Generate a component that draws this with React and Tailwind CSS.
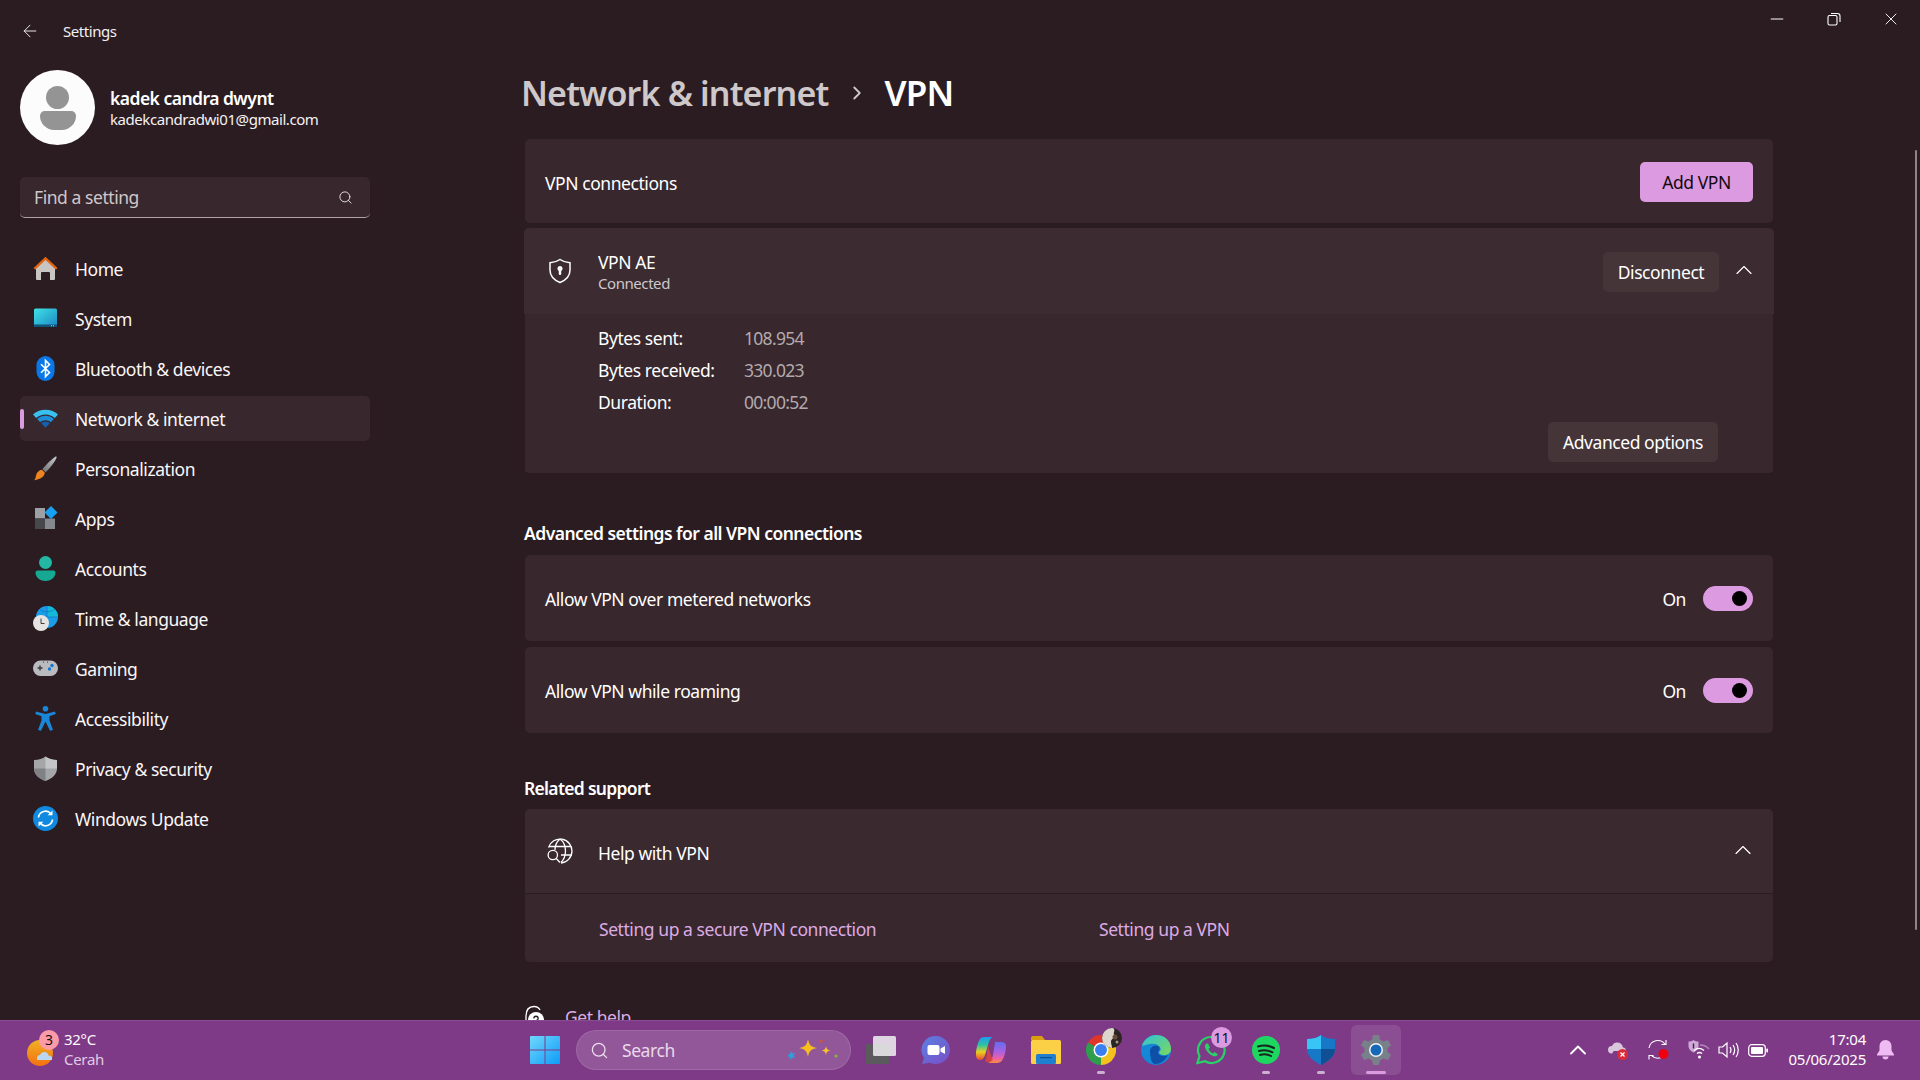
import { ArrowLeft, ChevronRight, ChevronUp, Minus, Search, X } from 'lucide-react';

const navItems = [
  { label: 'Home', icon: <HomeIcon /> },
  { label: 'System', icon: <SystemIcon /> },
  { label: 'Bluetooth & devices', icon: <BluetoothIcon /> },
  { label: 'Network & internet', icon: <WifiIcon />, active: true },
  { label: 'Personalization', icon: <BrushIcon /> },
  { label: 'Apps', icon: <AppsIcon /> },
  { label: 'Accounts', icon: <AccountsIcon /> },
  { label: 'Time & language', icon: <TimeIcon /> },
  { label: 'Gaming', icon: <GamingIcon /> },
  { label: 'Accessibility', icon: <AccessibilityIcon /> },
  { label: 'Privacy & security', icon: <PrivacyIcon /> },
  { label: 'Windows Update', icon: <UpdateIcon /> },
];

/* ====== Sidebar icons ====== */
function HomeIcon() {
  return (
    <svg width="25" height="25" viewBox="0 0 25 25">
      <path d="M3 11.500 12.500 3 22 11.500V23a1 1 0 0 1-1 1h-4v-7a1 1 0 0 0-1-1H9a1 1 0 0 0-1 1v7H4a1 1 0 0 1-1-1z" fill="#c9c5c3" />
      <path d="M.5 12 12.500.8 24.500 12l-1.600 1.700-10.400-9.700L2.100 13.700z" fill="#e0650f" />
    </svg>
  );
}
function SystemIcon() {
  return (
    <svg width="25" height="25" viewBox="0 0 25 25">
      <defs>
        <linearGradient id="sysG" x1="0" y1="0" x2="1" y2="1">
          <stop offset="0" stopColor="#40e2e6" />
          <stop offset="1" stopColor="#1b86c4" />
        </linearGradient>
      </defs>
      <rect x="1" y="2.500" width="23" height="18.500" rx="1.500" fill="url(#sysG)" />
      <path d="M1 18.500h23V20a1 1 0 0 1-1 1H2a1 1 0 0 1-1-1z" fill="#0f5378" />
      <rect x="18" y="19.300" width="1" height="1" fill="#9fd8ee" />
      <rect x="20" y="19.300" width="1" height="1" fill="#9fd8ee" />
    </svg>
  );
}
function BluetoothIcon() {
  return (
    <svg width="25" height="25" viewBox="0 0 25 25">
      <rect x="3.500" y="0" width="18" height="25" rx="9" fill="#0878e8" />
      <path d="M8 8.200 16.500 16.500 12.500 20.500V4.500L16.500 8.500 8 16.800" fill="none" stroke="#fff" strokeWidth="1.600" />
    </svg>
  );
}
function WifiIcon() {
  return (
    <svg width="25" height="25" viewBox="0 0 25 25">
      <path d="M0 8.500C3 5.500 7.500 3.800 12.500 3.800S22 5.500 25 8.500L21.800 12C19.300 9.700 16 8.400 12.500 8.400S5.700 9.700 3.200 12z" fill="#38c0f0" />
      <path d="M4.200 13C6.500 11 9.400 9.800 12.500 9.800s6 1.200 8.300 3.200l-3 3.200c-1.500-1.200-3.300-1.900-5.300-1.900s-3.800.7-5.300 1.900z" fill="#1c8fd8" />
      <path d="M8.200 17.200c1.200-.9 2.700-1.400 4.300-1.400s3.100.5 4.300 1.400l-4.300 4.600z" fill="#125fae" />
    </svg>
  );
}
function BrushIcon() {
  return (
    <svg width="25" height="25" viewBox="0 0 25 25">
      <defs>
        <linearGradient id="brushG" x1="0" y1="1" x2="1" y2="0">
          <stop offset="0" stopColor="#6d7074" />
          <stop offset="1" stopColor="#c8cacc" />
        </linearGradient>
      </defs>
      <path d="M22.600.6c.6-.3 1.200.2 1 .9-1.200 3.600-6 10.400-11 14.700l-3.200-3.100C13.600 8.600 19 2.600 22.600.6z" fill="url(#brushG)" />
      <path d="M8.800 13.700l3 2.900c-.3 3.600-3 6.800-10.800 7.600 2-1.800 1.600-3.500 2.300-5.800.7-2.300 2.900-4.300 5.500-4.700z" fill="#ee8420" />
    </svg>
  );
}
function AppsIcon() {
  return (
    <svg width="25" height="25" viewBox="0 0 25 25">
      <rect x="2" y="2" width="10" height="10.500" fill="#9da0a4" />
      <rect x="2" y="12.500" width="10" height="10.500" fill="#46484c" />
      <rect x="12" y="12.500" width="10" height="10.500" fill="#85888c" />
      <path d="M18 0l6.500 6.500L18 13l-6.500-6.500z" fill="#18a0f0" />
    </svg>
  );
}
function AccountsIcon() {
  return (
    <svg width="25" height="25" viewBox="0 0 25 25">
      <circle cx="12.500" cy="6.500" r="6.500" fill="#22b8a4" />
      <path d="M2.500 16.500a2 2 0 0 1 2-2h16a2 2 0 0 1 2 2c0 5-5 8.500-10 8.500s-10-3.500-10-8.500z" fill="#17a893" />
    </svg>
  );
}
function TimeIcon() {
  return (
    <svg width="25" height="25" viewBox="0 0 25 25">
      <circle cx="14" cy="11" r="11" fill="#1b9ce6" />
      <path d="M14 0a11 11 0 0 1 11 11H14z" fill="#16b8d8" />
      <path d="M3 11h22M14 0v22M7 3.500c4 3 10 3 14 0" fill="none" stroke="#0c74c4" strokeWidth=".7" />
      <circle cx="8" cy="17" r="8" fill="#e6e4e2" />
      <path d="M8 12.500V17.500h3.500" fill="none" stroke="#3c3c3c" strokeWidth="1" />
    </svg>
  );
}
function GamingIcon() {
  return (
    <svg width="25" height="25" viewBox="0 0 25 25">
      <rect x="0" y="4.500" width="25" height="15.500" rx="7.500" fill="#b9bbbe" />
      <path d="M4.500 12h5M7 9.500v5" stroke="#3c3e42" strokeWidth="1.500" />
      <circle cx="19" cy="9.500" r="1.700" fill="#1277d6" />
      <circle cx="16.500" cy="13" r="1.700" fill="#1277d6" />
      <rect x="10" y="5.600" width="1" height="1" fill="#3c3e42" />
      <rect x="14" y="5.600" width="1" height="1" fill="#3c3e42" />
    </svg>
  );
}
function AccessibilityIcon() {
  return (
    <svg width="25" height="25" viewBox="0 0 25 25">
      <circle cx="12.500" cy="2.800" r="2.800" fill="#1a86d8" />
      <path d="M3 5.500 12.500 8 22 5.500l.7 2.500-6.200 2.300v4.200l3.500 9.500-3 .8-4.500-9.300-4.500 9.300-3-.8L8.500 14.500v-4.200L2.300 8z" fill="#1a86d8" />
    </svg>
  );
}
function PrivacyIcon() {
  return (
    <svg width="25" height="25" viewBox="0 0 25 25">
      <path d="M12.500.5C15.500 2.800 19 4 24 4v8.500c0 5.500-4.500 10-11.500 12.500C5.500 22.500 1 18 1 12.500V4C6 4 9.500 2.800 12.500.5z" fill="#a5a6a8" />
      <path d="M12.500.5C15.500 2.800 19 4 24 4v8.500H12.500z" fill="#c4c5c6" />
      <path d="M12.500 12.500H1c0 5.500 4.500 10 11.500 12.500z" fill="#808184" />
    </svg>
  );
}
function UpdateIcon() {
  return (
    <svg width="25" height="25" viewBox="0 0 25 25">
      <circle cx="12.500" cy="12.500" r="12.500" fill="#0f8ae0" />
      <path d="M5.500 11.500a7 7 0 0 1 12.500-3.500" fill="none" stroke="#fff" strokeWidth="1.700" />
      <path d="M19.500 4.500v4.800h-4.800z" fill="#fff" />
      <path d="M19.500 13.500A7 7 0 0 1 7 17" fill="none" stroke="#fff" strokeWidth="1.700" />
      <path d="M5.500 20.500v-4.800h4.800z" fill="#fff" />
    </svg>
  );
}

/* ====== Content icons ====== */
function ShieldLockIcon() {
  return (
    <svg width="24" height="26" viewBox="0 0 24 26" fill="none">
      <path d="M12 1.500c2.800 2 6 3 10 3.200V12c0 6-3.800 10-10 12.500C5.800 22 2 18 2 12V4.700c4-.2 7.200-1.200 10-3.200z" stroke="#fff" strokeWidth="1.500" />
      <circle cx="12" cy="10.500" r="2.500" fill="#fff" />
      <rect x="10.800" y="11" width="2.400" height="6" rx="1" fill="#fff" />
    </svg>
  );
}
function GlobeSearchIcon() {
  return (
    <svg width="28" height="26" viewBox="0 0 28 26" fill="none" stroke="#fff" strokeWidth="1.300">
      <path d="M2.500 9.500A12 12 0 1 1 15 25" />
      <path d="M14 1c-3 2.500-5 6-5 11M14 1c3.500 2.500 5.500 7 5.500 12 0 5-1.500 8.500-4.500 11.500" />
      <path d="M3 8.500h22M15 17h11" />
      <circle cx="6.800" cy="17" r="4.700" />
      <path d="M10.200 20.500 14 24.500" />
    </svg>
  );
}
function GetHelpIcon() {
  return (
    <svg width="20" height="24" viewBox="0 0 20 24" fill="none">
      <path d="M2 11C2 5 5 1.500 10 1.500c3 0 5 1.500 6 3.500M2 11v5" stroke="#fff" strokeWidth="1.300" />
      <circle cx="12" cy="15" r="8" fill="#fff" />
      <path d="M9.800 13.500c0-3 4.400-3 4.400 0 0 1.500-2.200 1.500-2.200 3.300" stroke="#2b1c21" strokeWidth="1.300" />
    </svg>
  );
}

/* ====== Taskbar icons ====== */
function WeatherIcon() {
  return (
    <div className="relative w-[30px] h-[40px]">
      <svg width="30" height="40" viewBox="0 0 30 40" className="block">
        <defs>
          <linearGradient id="sunG" x1="0" y1="0" x2="0" y2="1">
            <stop offset="0" stopColor="#eeb224" />
            <stop offset="1" stopColor="#f56f12" />
          </linearGradient>
        </defs>
        <circle cx="13" cy="23" r="13" fill="url(#sunG)" />
        <path d="M10 28c0-2 1.500-3 3-3 .8-2 2.500-3 4.500-3s4 1.500 4 3.500c2 0 3.500 1 3.500 2.500v2H10z" fill="#b9d7f4" />
      </svg>
      <div className="absolute left-[12px] top-0 w-5 h-5 rounded-full bg-[#fc9aa8] text-[#111] text-[14px] leading-5 text-center">3</div>
    </div>
  );
}
function StartIcon() {
  return (
    <svg width="30" height="30" viewBox="0 0 30 30">
      <defs>
        <linearGradient id="startG" x1="0" y1="0" x2="1" y2="1">
          <stop offset="0" stopColor="#6fd8fb" />
          <stop offset="1" stopColor="#0f9bf8" />
        </linearGradient>
      </defs>
      <path d="M1 1h13.500v13.500H0V2a1 1 0 0 1 1-1zM15.500 1H29a1 1 0 0 1 1 1v12.500H15.500zM0 15.500h14.500V29H1a1 1 0 0 1-1-1zM15.500 15.500H30V28a1 1 0 0 1-1 1H15.500z" fill="url(#startG)" />
    </svg>
  );
}
function SparkleIcon() {
  return (
    <svg width="52" height="24" viewBox="0 0 52 24">
      <path d="M21 1c1 6 3 8 9 9-6 1-8 3-9 9-1-6-3-8-9-9 6-1 8-3 9-9z" fill="#f8be1e" />
      <path d="M39 8c.5 3 1.500 4 4.500 4.500-3 .5-4 1.500-4.500 4.500-.5-3-1.500-4-4.500-4.500 3-.5 4-1.500 4.500-4.500z" fill="#f8c22e" />
      <path d="M4 13l1 2.500 3-.5-1.500 2.500L8 20l-3-.5L3.500 22 3 19l-3-1 2.500-1.500z" fill="#2aa2e0" />
      <circle cx="34" cy="3" r="1.600" fill="#d8552a" />
      <circle cx="49" cy="18" r="1.600" fill="#84b83c" />
    </svg>
  );
}
function TaskViewIcon() {
  return (
    <svg width="30" height="28" viewBox="0 0 30 28">
      <rect x="0" y="8" width="23" height="20" rx="1.500" fill="#5b5b5e" />
      <rect x="7" y="0" width="23" height="20" rx="1.500" fill="#f0f0f2" fillOpacity=".85" />
    </svg>
  );
}
function MeetIcon() {
  return (
    <svg width="30" height="30" viewBox="0 0 30 30">
      <defs>
        <linearGradient id="meetG" x1="0" y1="0" x2="1" y2="1">
          <stop offset="0" stopColor="#5a82e0" />
          <stop offset="1" stopColor="#7a4cc8" />
        </linearGradient>
      </defs>
      <path d="M15 1a14 14 0 1 1-6 26.700L1 29l2-6A14 14 0 0 1 15 1z" fill="url(#meetG)" />
      <rect x="6.500" y="10" width="12" height="10" rx="2" fill="#fff" />
      <path d="M19.500 13.500 24 11v8l-4.500-2.500z" fill="#fff" />
    </svg>
  );
}
function CopilotIcon() {
  return (
    <svg width="30" height="26" viewBox="0 0 30 26">
      <defs>
        <linearGradient id="copA" x1="0.500" y1="0" x2="0.500" y2="1">
          <stop offset="0" stopColor="#1f9cf0" />
          <stop offset=".35" stopColor="#2cc4a0" />
          <stop offset=".65" stopColor="#e8d020" />
          <stop offset="1" stopColor="#f04828" />
        </linearGradient>
        <linearGradient id="copB" x1="0.500" y1="0" x2="0.500" y2="1">
          <stop offset="0" stopColor="#5a70f0" />
          <stop offset=".5" stopColor="#b060e0" />
          <stop offset=".8" stopColor="#f060a0" />
          <stop offset="1" stopColor="#f89040" />
        </linearGradient>
      </defs>
      <path d="M8 0h9c-3 1-4 4-5 8l-3 10c-.6 3-3 5-5 5-3 0-4-3-4-6 0-5 2-12 3.500-14C4.500.7 6 0 8 0z" fill="url(#copA)" />
      <path d="M18 5h7c3 0 5 1.500 5 4 0 5-2 12-4 14.500-1 1.500-3 2.500-5 2.500h-9c3-1 4-4 5-8l1.500-9c.3-2 1-3.500 0-4.500z" fill="url(#copB)" />
      <path d="M12 8c1 6 3 10 5 15-3 3-6 3-8 1 2-4 2-10 3-16z" fill="#e84830" fillOpacity=".75" />
    </svg>
  );
}
function ExplorerIcon() {
  return (
    <svg width="30" height="28" viewBox="0 0 30 28">
      <path d="M0 2a2 2 0 0 1 2-2h9l3 4h-14z" fill="#d89e10" />
      <rect x="0" y="4" width="30" height="24" rx="1.500" fill="#fbd047" />
      <rect x="5" y="18" width="20" height="10" rx="1.500" fill="#1f7fd0" />
      <rect x="9" y="21" width="12" height="1.200" fill="#0d4f8c" />
    </svg>
  );
}
function ChromeIcon() {
  return (
    <div className="relative w-[30px] h-[30px]">
      <svg width="30" height="30" viewBox="0 0 30 30" className="block">
        <path d="M15 15 2 7.500A15 15 0 0 1 28 7.500z" fill="#e0352b" />
        <path d="M15 15 28 7.500A15 15 0 0 1 15 30z" fill="#f3c21d" />
        <path d="M15 15 15 30A15 15 0 0 1 2 7.500z" fill="#2e9e4c" />
        <circle cx="15" cy="15" r="7.500" fill="#fff" />
        <circle cx="15" cy="15" r="6" fill="#3a7ff0" />
      </svg>
      <svg width="20" height="20" viewBox="0 0 20 20" className="absolute left-[16px] top-[-7px]">
        <circle cx="10" cy="10" r="10" fill="#2c2422" />
        <path d="M0 10a10 10 0 0 1 10-10c2 0 3 2 2 4-1 2 1 3 0 5-1 2-3 2-3 5 0 2 1 4 1 6A10 10 0 0 1 0 10z" fill="#ddd6cd" />
        <circle cx="13" cy="9" r="2.500" fill="#6a4a3a" />
        <circle cx="15" cy="14" r="1.500" fill="#a89888" />
      </svg>
    </div>
  );
}
function EdgeIcon() {
  return (
    <svg width="30" height="30" viewBox="0 0 30 30">
      <defs>
        <linearGradient id="edgeA" x1="0" y1="0" x2="1" y2="1">
          <stop offset="0" stopColor="#2dc3d8" />
          <stop offset="1" stopColor="#7fd85a" />
        </linearGradient>
      </defs>
      <circle cx="15" cy="15" r="15" fill="#1487d6" />
      <path d="M1 11C3 4 9 0 15 0c9 0 15 6 15 14 0 4-3 6-7 6-3 0-5-1-5-3 2-1 2-3 1-5-2-3-6-4-10-3-4 .5-7 2-8 2z" fill="url(#edgeA)" />
      <path d="M9 16c0-4 4-6 8-5 2 1 2 4 0 6 0 3 3 4 6 4 2 0 3-.5 4-1-3 6-8 9-13 9-3 0-5-6-5-13z" fill="#0f4fa8" />
    </svg>
  );
}
function WhatsappIcon() {
  return (
    <div className="relative w-[30px] h-[30px]">
      <svg width="30" height="30" viewBox="0 0 30 30" fill="none" className="block">
        <path d="M15.500 2a13 13 0 1 1-6.500 24.200L1.500 28l2-7A13 13 0 0 1 15.500 2z" stroke="#26d366" strokeWidth="2.200" />
        <path d="M10.500 8.500c-1.500 1-2 3-1 5 1.500 3.500 4 6 7.500 7.500 2 .8 4 .2 5-1.500l-3.500-2.500-1.500 1.500c-2-1-3.500-2.500-4.500-4.500l1.500-1.500L12 8.500z" fill="#26d366" />
      </svg>
      <div className="absolute left-[15px] top-[-8px] w-[21px] h-[21px] rounded-full bg-[#dc9be0] text-[#111] text-[14px] leading-[21px] text-center">11</div>
    </div>
  );
}
function SpotifyIcon() {
  return (
    <svg width="28" height="28" viewBox="0 0 28 28">
      <circle cx="14" cy="14" r="14" fill="#1ed760" />
      <path d="M6 10.500c5-1.500 11-1 16 1.500M7 15c4.500-1.200 9.500-.8 13.500 1.300M8 19c3.500-1 8-.7 11 1" fill="none" stroke="#14281c" strokeWidth="2" strokeLinecap="round" />
    </svg>
  );
}
function DefenderIcon() {
  return (
    <svg width="28" height="30" viewBox="0 0 28 30">
      <path d="M14 0c3 2.500 8 4 14 4v10c0 7-6 12-14 16C6 26 0 21 0 14V4c6 0 11-1.500 14-4z" fill="#1878c8" />
      <path d="M14 0C11 2.500 6 4 0 4v10h14z" fill="#38c4f4" />
      <path d="M14 14h14c0 7-6 12-14 16z" fill="#0f4f94" />
    </svg>
  );
}
function GearIcon() {
  return (
    <svg width="30" height="30" viewBox="0 0 30 30">
      <path d="M12 0h6l1 4.500 3.500 2 4.500-1.500 3 5.200-3.500 3v3.600l3.500 3-3 5.200-4.500-1.500-3.500 2L18 30h-6l-1-4.500-3.500-2L3 25l-3-5.200 3.500-3v-3.600L0 10.200 3 5l4.500 1.500 3.500-2z" fill="#78808a" />
      <circle cx="15" cy="15" r="7" fill="#f2f2f2" />
      <circle cx="15" cy="15" r="5.500" fill="#1568b8" />
    </svg>
  );
}
function CloudErrorIcon() {
  return (
    <svg width="20" height="20" viewBox="0 0 20 20">
      <path d="M0 10a4 4 0 0 1 4-4c1-2.500 3-3.500 5-3.500 3.500 0 5.500 2 6 5 2 .2 3 1.500 3 3.500H6c-1.500 0-1 3-2.500 2.500C1.500 13.500 0 12 0 10z" fill="#d9c7db" />
      <circle cx="14.500" cy="14.500" r="5.500" fill="#d92c38" />
      <path d="M12.500 12.500l4 4M16.500 12.500l-4 4" stroke="#fff" strokeWidth="1.200" />
    </svg>
  );
}
function SyncIcon() {
  return (
    <svg width="22" height="22" viewBox="0 0 22 22" fill="none">
      <path d="M1 9a9 9 0 0 1 16-4" stroke="#fff" strokeWidth="1.100" />
      <path d="M18 1v4.500h-4.500" stroke="#fff" strokeWidth="1.100" />
      <path d="M15 17.500A9 9 0 0 1 4 17" stroke="#fff" strokeWidth="1.100" />
      <path d="M1 20.500V16.500h4.500" stroke="#fff" strokeWidth="1.100" />
      <circle cx="15.500" cy="15" r="5" fill="#f0000e" />
    </svg>
  );
}
function ShieldWifiIcon() {
  return (
    <svg width="22" height="20" viewBox="0 0 22 20" fill="none">
      <path d="M5.500 0c1.500 1 3 1.500 5 1.500V6c0 3-2 5-5 6.500C2.500 11 .5 9 .5 6V1.500c2 0 3.500-.5 5-1.500z" fill="#cfa9d8" />
      <rect x="4.800" y="3.500" width="1.400" height="5" fill="#41204a" />
      <path d="M6 10.500c3-2.500 7-2.500 10 0M9 13.500c1.500-1.200 3.500-1.200 5 0" stroke="#fff" strokeWidth="1.300" />
      <path d="M12 5c3.500 0 7 1.500 9 4" stroke="#fff" strokeOpacity=".4" strokeWidth="1.300" />
      <circle cx="11.500" cy="17" r="1.500" fill="#fff" />
    </svg>
  );
}
function VolumeIcon() {
  return (
    <svg width="21" height="18" viewBox="0 0 21 18" fill="none" stroke="#fff" strokeWidth="1.200">
      <path d="M1 6h3.500L9 2v14l-4.500-4H1z" />
      <path d="M12 6c1.200 1.800 1.200 4.200 0 6M15 4c2 3 2 7 0 10M18 2c3 4 3 10 0 14" />
    </svg>
  );
}
function BatteryIcon() {
  return (
    <svg width="20" height="13" viewBox="0 0 20 13" fill="none">
      <rect x=".7" y=".7" width="16.600" height="11.600" rx="3" stroke="#fff" strokeWidth="1.200" />
      <rect x="3" y="3" width="12" height="7" rx="1" fill="#fff" />
      <rect x="18.300" y="4.500" width="1.700" height="4" rx=".8" fill="#fff" />
    </svg>
  );
}
function BellIcon() {
  return (
    <svg width="17" height="20" viewBox="0 0 17 20">
      <path d="M8.500 0C4.500 0 2.500 3 2.500 6.500v4L0 14.500v1h17v-1l-2.500-4v-4C14.500 3 12.500 0 8.500 0z" fill="#eebcf2" />
      <path d="M5.500 16.500h6c0 2-1.200 3-3 3s-3-1-3-3z" fill="#eebcf2" />
    </svg>
  );
}

/* ====== Small pieces ====== */
const Toggle = () => (
  <div className="flex items-center gap-[17px]">
    <span className="mt-[1px]">On</span>
    <div className="flex items-center justify-end w-[50px] h-[25px] rounded-full bg-[#dc9be0] pr-[6px]">
      <div className="w-[15px] h-[15px] rounded-full bg-black" />
    </div>
  </div>
);

const TaskbarApp = ({ children, dot, active }) => (
  <div className={`relative flex items-center justify-center w-[50px] h-[50px] rounded-md ${active ? 'bg-white/10' : ''}`}>
    {children}
    {dot && (
      <div className={`absolute bottom-[1px] h-[3px] rounded-full ${active ? 'w-[20px] bg-[#dc9be0]' : 'w-2 bg-white/60'}`} />
    )}
  </div>
);

const App = () => {
  return (
    <div className="flex flex-col w-[1920px] h-[1080px] overflow-hidden bg-[#2b1c21] text-white text-[17.5px] leading-6 [font-family:'Noto_Sans',sans-serif] tracking-[-0.025em]">
      <div className="relative flex-1 min-h-0 overflow-hidden">
        {/* ====== Title bar ====== */}
        <div className="flex items-center justify-between h-[62px] pl-[20px] pr-[19px]">
          <div className="flex items-center -mt-[1px]">
            <ArrowLeft className="w-[20px] h-[20px] text-[#e8e4e6]" strokeWidth={1.2} />
            <span className="ml-[23px] text-[15px] text-[#f3f0f1]">Settings</span>
          </div>
          <div className="flex items-center gap-[37px] -mt-[24px]">
            <Minus className="w-[20px] h-[20px]" strokeWidth={1.2} />
            <svg width="20" height="20" viewBox="0 0 20 20" fill="none" stroke="#fff" strokeWidth="1.100">
              <rect x="4" y="6.500" width="9" height="9.500" rx="1.500" />
              <path d="M7 4.500h6.500a2.500 2.500 0 0 1 2.500 2.500v6" />
            </svg>
            <X className="w-[20px] h-[20px]" strokeWidth={1.1} />
          </div>
        </div>

        <div className="flex">
          {/* ====== Sidebar ====== */}
          <div className="w-[524px] pl-[20px] pt-[8px] shrink-0">
            <div className="flex items-center h-[75px]">
              <div className="flex flex-col items-center justify-center w-[75px] h-[75px] rounded-full bg-[#fcfcfc]">
                <div className="w-[23px] h-[23px] rounded-full bg-[#949494]" />
                <div className="w-[36px] h-[19px] mt-[2px] rounded-t-[6px] rounded-b-[18px] bg-[#949494]" />
              </div>
              <div className="ml-[15px] mt-[1px]">
                <div className="font-semibold text-[17.5px] leading-[22px] tracking-[-0.03em]">kadek candra dwynt</div>
                <div className="text-[15px] leading-[20px] text-[#f5f2f3]">kadekcandradwi01@gmail.com</div>
              </div>
            </div>

            <div className="flex items-center justify-between w-[350px] h-[41px] mt-[32px] pl-[14px] pr-[17px] rounded-[5px] bg-[#38272d] border-b border-[#b0a2a8]">
              <span className="text-[#cfc7ca]">Find a setting</span>
              <Search className="w-[15px] h-[15px] text-[#e8e4e6]" strokeWidth={1.5} />
            </div>

            <nav className="mt-[28px] w-[350px] flex flex-col gap-[5px]">
              {navItems.map((item) => (
                <div
                  key={item.label}
                  className={`relative flex items-center h-[45px] pl-[13px] rounded-[5px] ${item.active ? 'bg-[#38272d]' : ''}`}
                >
                  {item.active && <div className="absolute left-0 top-[13px] w-[4px] h-[20px] rounded-full bg-[#dc9be0]" />}
                  <div className="flex items-center justify-center w-[25px] h-[25px]">{item.icon}</div>
                  <span className="ml-[17px] text-[#faf7f8]">{item.label}</span>
                </div>
              ))}
            </nav>
          </div>

          {/* ====== Content ====== */}
          <div className="w-[1250px] shrink-0">
            <div className="flex items-center h-[62px] mb-[15px] -ml-[3px] text-[34px] font-semibold tracking-[-0.025em]">
              <span className="text-[#cfc8ca]">Network &amp; internet</span>
              <ChevronRight className="w-[22px] h-[22px] mx-[18px] text-[#cfc8ca]" strokeWidth={2} />
              <span className="ml-[-2px] text-[35px] tracking-[-0.02em]">VPN</span>
            </div>

            <div className="flex items-center justify-between h-[84px] pl-[20px] pr-[20px] mx-[1px] rounded-[5px] bg-[#38272d]">
              <span className="mt-[4px]">VPN connections</span>
              <button className="w-[113px] h-[40px] mt-[1px] rounded-[5px] bg-[#dc9be0] text-[#14090f]">Add VPN</button>
            </div>

            {/* VPN AE expander */}
            <div className="mt-[5px] rounded-[5px] overflow-hidden">
              <div className="flex items-center h-[86px] pl-[24px] pr-[20px] bg-[#3c2b31]">
                <ShieldLockIcon />
                <div className="ml-[26px] mt-[2px] flex-1">
                  <div className="leading-[22px]">VPN AE</div>
                  <div className="text-[15px] leading-[20px] text-[#cfc7ca]">Connected</div>
                </div>
                <button className="w-[116px] h-[40px] rounded-[5px] bg-[#453539] mt-[2px]">Disconnect</button>
                <ChevronUp className="w-[28px] h-[28px] ml-[11px] -mr-[4px] -mt-[2px]" strokeWidth={1} />
              </div>
              <div className="h-[159px] mx-[1px] pl-[73px] pr-[55px] pt-[8px] bg-[#38272d]">
                {[
                  ['Bytes sent:', '108.954'],
                  ['Bytes received:', '330.023'],
                  ['Duration:', '00:00:52'],
                ].map(([label, value]) => (
                  <div key={label} className="flex items-center h-[32px]">
                    <span className="w-[146px]">{label}</span>
                    <span className="text-[#b3aaad] tracking-[-0.04em]">{value}</span>
                  </div>
                ))}
                <div className="flex justify-end mt-[4px]">
                  <button className="w-[170px] h-[40px] rounded-[5px] bg-[#453539]">Advanced options</button>
                </div>
              </div>
            </div>

            <div className="flex items-end h-[82px] pb-[10px] font-semibold tracking-[-0.03em]">Advanced settings for all VPN connections</div>

            <div className="flex flex-col gap-[6px] mx-[1px]">
              <div className="flex items-center justify-between h-[86px] pl-[20px] pr-[20px] rounded-[5px] bg-[#38272d]">
                <span className="mt-[1px]">Allow VPN over metered networks</span>
                <Toggle />
              </div>
              <div className="flex items-center justify-between h-[86px] pl-[20px] pr-[20px] rounded-[5px] bg-[#38272d]">
                <span className="mt-[1px]">Allow VPN while roaming</span>
                <Toggle />
              </div>
            </div>

            <div className="flex items-end h-[76px] pb-[9px] font-semibold tracking-[-0.04em]">Related support</div>

            {/* Help with VPN */}
            <div className="mx-[1px] rounded-[5px] overflow-hidden bg-[#38272d]">
              <div className="flex items-center h-[85px] pl-[21px] pr-[20px] border-b border-[#2b1c21] bg-[#3a292f]">
                <GlobeSearchIcon />
                <span className="ml-[24px] flex-1 mt-[4px]">Help with VPN</span>
                <ChevronUp className="w-[28px] h-[28px] -mr-[4px] -mt-[2px]" strokeWidth={1} />
              </div>
              <div className="flex items-center h-[68px] pl-[74px] pt-[1px] text-[#dcabe3]">
                <span className="w-[500px]">Setting up a secure VPN connection</span>
                <span>Setting up a VPN</span>
              </div>
            </div>

            <div className="flex items-center mt-[43px] text-[#dcabe3]">
              <GetHelpIcon />
              <span className="ml-[21px]">Get help</span>
            </div>
          </div>
        </div>

        {/* scrollbar thumb */}
        <div className="absolute right-[3px] top-[150px] w-[2px] h-[780px] rounded-full bg-[#8f8589]" />
      </div>

      {/* ====== Taskbar ====== */}
      <div className="flex items-center h-[60px] shrink-0 pl-[27px] pb-[1px] bg-[#7f3a87] border-t border-[#8c4c93] text-[15px] leading-5 tracking-normal">
        <div className="flex items-center w-[503px]">
          <WeatherIcon />
          <div className="ml-[7px] -mt-[2px] tracking-[-0.02em]">
            <div className="text-[#fdfbfd]">32°C</div>
            <div className="text-[#e0cbe3]">Cerah</div>
          </div>
        </div>

        <StartIcon />

        <div className="flex items-center w-[275px] h-[40px] ml-[16px] pl-[13px] pr-[11px] rounded-full bg-white/15 border border-white/10">
          <Search className="w-[19px] h-[19px] text-[#ece0ee]" strokeWidth={1.6} />
          <span className="ml-[13px] flex-1 text-[17.5px] tracking-[-0.025em] text-[#ead9ec]">Search</span>
          <SparkleIcon />
        </div>

        <div className="flex items-center gap-[5px] ml-[5px]">
          <TaskbarApp><TaskViewIcon /></TaskbarApp>
          <TaskbarApp><MeetIcon /></TaskbarApp>
          <TaskbarApp><CopilotIcon /></TaskbarApp>
          <TaskbarApp><ExplorerIcon /></TaskbarApp>
          <TaskbarApp dot><ChromeIcon /></TaskbarApp>
          <TaskbarApp><EdgeIcon /></TaskbarApp>
          <TaskbarApp><WhatsappIcon /></TaskbarApp>
          <TaskbarApp dot><SpotifyIcon /></TaskbarApp>
          <TaskbarApp dot><DefenderIcon /></TaskbarApp>
          <TaskbarApp dot active><GearIcon /></TaskbarApp>
        </div>

        {/* tray */}
        <ChevronUp className="w-[28px] h-[28px] ml-[163px] -mr-[4px]" strokeWidth={1.6} />
        <div className="flex items-center ml-[20px]"><CloudErrorIcon /></div>
        <div className="flex items-center ml-[20px]"><SyncIcon /></div>
        <div className="flex items-center ml-[18px]"><ShieldWifiIcon /></div>
        <div className="flex items-center ml-[8px]"><VolumeIcon /></div>
        <div className="flex items-center ml-[9px]"><BatteryIcon /></div>
        <div className="w-[98px] text-right -mt-[3px] tracking-[-0.015em]">
          <div>17:04</div>
          <div>05/06/2025</div>
        </div>
        <div className="ml-[11px]"><BellIcon /></div>
      </div>
    </div>
  );
};

export default App;
